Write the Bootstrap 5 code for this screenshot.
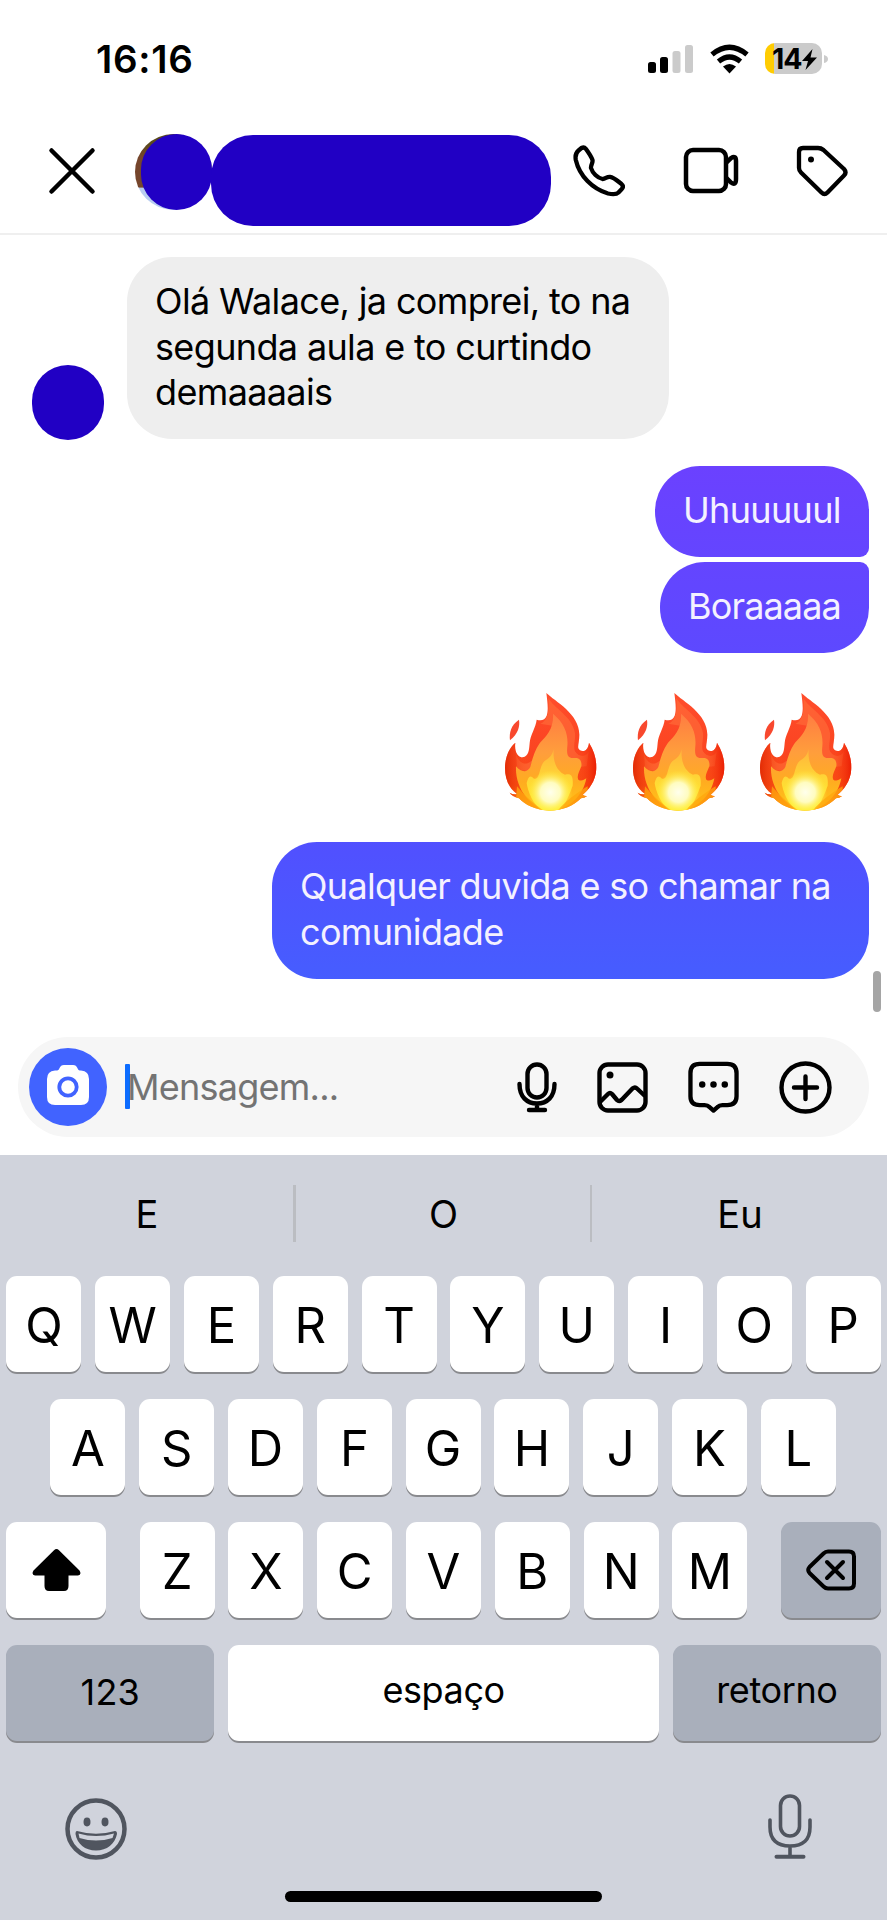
<!DOCTYPE html>
<html lang="pt-BR">
<head>
<meta charset="utf-8">
<meta name="viewport" content="width=device-width, initial-scale=1">
<title>Mensagens</title>
<link href="https://cdn.jsdelivr.net/npm/bootstrap@5.3.0/dist/css/bootstrap.min.css" rel="stylesheet">
<style>
  body { font-family: Inter, "Liberation Sans", sans-serif; color: #000; background: #fff; width: 887px; height: 1920px; overflow: hidden; }
  svg { display: block; flex: none; }
  .status { height: 118px; padding: 0 63px 0 96px; }
  .clock { font-size: 38.5px; font-weight: 600; line-height: 118px; letter-spacing: .7px; }
  .indicators { padding-top: 43px; }
  .signal { margin-right: 17px; }
  .wifi { margin-right: 16px; }
  .bolt { margin: 6px 0 0 0; }
  .nub { margin: 12px -4px 0 2px; }
  .battery { width: 57px; height: 31px; border-radius: 10px; background: linear-gradient(90deg, #ffcc02 9px, #cbcbcb 9px); font-size: 28.5px; font-weight: 700; line-height: 32px; padding-left: 7px; letter-spacing: -1px; }
  .topbar { height: 117px; border-bottom: 2px solid #efefef; padding: 16px 38px 0 47px; }
  .close-icon { margin: 11.500px 38px 0 0; }
  .phone-icon { margin: 11px 0 0 22px; }
  .video-icon { margin: 12.500px 0 0 58px; }
  .tag-icon { margin: 11px 0 0 57px; }
  .photo { width: 77px; height: 76px; border-radius: 50%; background: linear-gradient(#5a4a1c 0 12%, #75452c 30% 70%, #b9cdf0 71%); padding-left: 6px; }
  .ink { background: #2100c4; }
  .photo .ink { width: 71px; height: 76px; border-radius: 36px; }
  .name-cover { width: 340px; height: 91px; border-radius: 42px; margin: 1px 0 0 -1px; }
  .chat { height: 802px; padding: 22px 18px 0 32px; }
  .peer { width: 72px; height: 75px; border-radius: 36px; margin-right: 23px; margin-bottom: -1px; }
  .bubble { border-radius: 45px; padding: 22px 28px 23px; font-size: 36px; line-height: 45.6px; white-space: nowrap; }
  .theirs { background: #eee; width: 542px; height: 182px; letter-spacing: -.64px; }
  .mine { color: #f4f1ff; letter-spacing: -.68px; }
  .m1 { width: 214px; height: 91px; border-bottom-right-radius: 9px; background: linear-gradient(#6b41ff, #6445ff); margin-top: 27px; }
  .m2 { width: 209px; height: 91px; border-top-right-radius: 9px; background: linear-gradient(#6445ff, #5d49ff); margin-top: 5px; letter-spacing: -.85px; }
  .m3 { width: 597px; height: 137px; background: linear-gradient(#5150ff, #465dff); margin-top: 31px; }
  .flames { gap: 35.5px; margin: 40px 17px 0 0; }
  .scroller { right: 6px; top: 736px; width: 8px; height: 41px; border-radius: 4px; background: #a5a5a5; }
  .composer { height: 100px; margin: 0 18px; border-radius: 50px; background: #f6f6f6; padding: 0 37px 0 11px; }
  .cam { width: 78px; height: 78px; background: #4163ff; }
  .cam svg { margin-bottom: 4px; }
  .caret { width: 5px; height: 45px; border-radius: 1px; background: #0c6cff; margin-left: 17.5px; }
  .hint { font-size: 36px; color: #737373; letter-spacing: -.75px; margin-left: -2.5px; }
  .actions { gap: 40px; }
  .actions svg { margin-top: 1px; }
  .keyboard { height: 765px; margin-top: 18.5px; background: #d0d3dc; }
  .suggest { height: 120.5px; font-size: 38px; padding-top: 2px; }
  .suggest div { line-height: 115px; }
  .suggest .bar { width: 2.5px; height: 57px; background: #bbbdc2; margin: 28px 1px 0 -1px; }
  .keys { height: 96px; margin-bottom: 27px; padding: 0 6.3px; gap: 13.8px; }
  .nudge { padding-right: 7px; }
  .key { flex: none; width: 75px; height: 96px; border-radius: 11px; background: #fff; box-shadow: 0 2px 0 #898a8e; font-size: 49px; line-height: 99.5px; text-align: center; }
  .dim { background: #a9afbb; }
  .wide { width: 100px; display: flex; align-items: center; justify-content: center; }
  .word { font-size: 36px; line-height: 91px; letter-spacing: -.4px; }
  .side { width: 208px; }
  .digits { line-height: 95px; letter-spacing: .2px; }
  .space { width: 431px; }
  .tray { padding: 26.500px 75px 0 65px; }
  .smile { margin-top: 4px; }
  .home-line { width: 317px; height: 11px; border-radius: 6px; background: #000; margin-top: 30.5px; }
</style>
</head>
<body class="d-flex flex-column">
<svg width="0" height="0" class="position-absolute">
  <defs>
    <linearGradient id="fo" x1="0" y1="0" x2="0" y2="1"><stop offset="0" stop-color="#ff4d2c"/><stop offset=".5" stop-color="#fb4421"/><stop offset=".78" stop-color="#f84a10"/><stop offset="1" stop-color="#ffa010"/></linearGradient>
    <linearGradient id="fs" x1="0" y1="0" x2="1" y2="0"><stop offset="0" stop-color="#dc2500" stop-opacity=".8"/><stop offset=".25" stop-color="#ff5a20" stop-opacity="0"/><stop offset=".75" stop-color="#ff5a20" stop-opacity="0"/><stop offset="1" stop-color="#e81800" stop-opacity=".9"/></linearGradient>
    <linearGradient id="fm" x1="0" y1="0" x2="0" y2="1"><stop offset="0" stop-color="#ff7c42"/><stop offset=".4" stop-color="#ff9e3c"/><stop offset=".7" stop-color="#ffac20"/><stop offset="1" stop-color="#ffc816"/></linearGradient>
    <linearGradient id="fy" x1="0" y1="0" x2="0" y2="1"><stop offset="0" stop-color="#ffb43c"/><stop offset=".5" stop-color="#ffd835"/><stop offset="1" stop-color="#fff02c"/></linearGradient>
    <radialGradient id="fw"><stop offset="0" stop-color="#ffffec"/><stop offset=".45" stop-color="#fffcc0"/><stop offset="1" stop-color="#ffee40" stop-opacity="0"/></radialGradient>
    <clipPath id="fc"><path d="M124 0C150 25 223 62 223 125C223 145 218 158 220 166C224 177 248 182 252 149C268 175 275 200 274 228C272 265 250 292 233 305Q241 311 247 308Q240 315 228 316C205 340 170 353 133 353C95 353 58 335 42 316C28 312 18 306 14 299Q25 306 36 303C10 285 0 255 0 225C0 195 12 165 31 149C27 178 40 195 53 193C72 190 72 170 74 150C76 125 92 105 95 80C108 84 120 82 125 68C131 50 127 25 124 0Z"/></clipPath>
    <symbol id="flame" viewBox="0 0 276 354">
      <path fill="#f8482e" d="M42 80C45 100 40 121 15 142C12 120 17 97 42 80Z"/>
      <g clip-path="url(#fc)">
        <rect width="276" height="354" fill="url(#fo)"/>
        <path fill="#ff6f3b" d="M130 14C145 45 203 70 210 120C212 140 204 160 210 175C222 195 245 192 251 175L245 220L190 225L150 90L90 190C70 225 40 215 33 180L36 230L110 240L150 100L106 92Q136 80 130 14Z" opacity=".6"/>
        <rect width="276" height="354" fill="url(#fs)"/>
        <path fill="url(#fm)" d="M144 62C180 92 190 125 187 160C184 190 190 197 208 195C225 193 231 205 229 220C224 235 214 248 220 260C228 266 237 261 244 256C235 310 185 354 135 354C75 345 30 285 33 220C50 240 68 238 76 222C83 196 88 173 105 149C125 130 147 105 144 62Z"/>
        <path fill="url(#fy)" d="M146 168C143 205 155 235 180 245C200 240 205 250 203 278C195 300 177 345 162 354H110C85 335 68 295 65 270C70 250 75 245 87 257C106 262 102 220 118 205C132 195 142 188 146 168Z"/>
        <ellipse cx="136" cy="298" rx="66" ry="66" fill="url(#fw)"/>
        <path fill="#ffa60e" d="M36 280C60 310 90 335 116 354H30ZM158 354C180 325 215 300 248 280V354Z" opacity=".75"/>
      </g>
    </symbol>
  </defs>
</svg>

<div class="status d-flex justify-content-between">
  <div class="clock">16:16</div>
  <div class="indicators d-flex align-items-start">
    <svg class="signal" width="45" height="31" viewBox="0 0 45 31"><rect x="0" y="19" width="8" height="11" rx="2.500"/><rect x="12" y="14" width="8" height="16" rx="2.500"/><g fill="#cbcbcb"><rect x="24.500" y="8" width="8" height="22" rx="2.500"/><rect x="37" y="2" width="8" height="28" rx="2.500"/></g></svg>
    <svg class="wifi" width="39" height="31" viewBox="0 0 39 31"><g fill="none" stroke="#000" stroke-width="5.200"><path d="M2 11.500Q19.500-3 37 11.500"/><path d="M8.500 18.500Q19.500 9.500 30.500 18.500"/></g><path d="M13 23.500Q19.500 18.500 26 23.500L19.500 30.500Z"/></svg>
    <div class="battery d-flex">14<svg class="bolt" width="15" height="21" viewBox="0 0 15 21"><path d="M10.500 0L0 12H6L3.500 21L15 8.500H8.500Z"/></svg></div>
    <svg class="nub" width="4" height="8" viewBox="0 0 4 8"><path fill="#cbcbcb" d="M0 0Q4 1 4 4T0 8Z"/></svg>
  </div>
</div>

<header class="topbar d-flex align-items-start">
  <svg class="close-icon" width="50" height="50" viewBox="0 0 50 50"><path d="M4.500 4.500L45.500 45.500M45.500 4.500L4.500 45.500" stroke="#000" stroke-width="4.500" stroke-linecap="round"/></svg>
  <div class="photo"><div class="ink"></div></div>
  <div class="name-cover ink"></div>
  <svg class="phone-icon" width="52" height="52" viewBox="0 0 52 52" fill="none" stroke="#000" stroke-width="4.300" stroke-linejoin="round"><path d="M5.500 5.500L8.500 3C10 2.200 11.500 2.200 12.800 3.800C15.500 7.500 18 11 19.500 15C20.200 18 17.500 20 18 23C19.500 28 24.500 33 29.500 34C32.500 34.200 33.500 31.500 37 31.800C41.500 32.500 44.500 36 48.500 39C50.200 40.500 50 42.500 48.800 44L45.500 47.500C43.500 49.500 40 49.500 35 48.500C19.500 44 6.500 31 2.800 15C2 10.500 2.500 8 5.500 5.500Z"/></svg>
  <svg class="video-icon" width="56" height="48" viewBox="0 0 56 48" fill="none" stroke="#000" stroke-width="4.500" stroke-linejoin="round"><rect x="3" y="3" width="40" height="41" rx="7"/><path d="M43 16L48 11.200Q53 8 53 14V32Q53 39 48 35.500L43 30.500"/></svg>
  <svg class="tag-icon" width="52" height="52" viewBox="0 0 52 52" fill="none" stroke="#000" stroke-width="4.300" stroke-linejoin="round"><path d="M7 3H22Q25 3 27.500 5L48 24Q51 27.500 48 30.500L31.500 47.500Q28.500 50.500 25.500 47.500L5 27.500Q3 25.500 3 23V7Q3 3 7 3Z"/><circle cx="15" cy="14.500" r="3" fill="#000" stroke="none"/></svg>
</header>

<main class="chat position-relative d-flex flex-column align-items-end">
  <div class="align-self-start d-flex align-items-end">
    <div class="peer ink"></div>
    <div class="bubble theirs">Olá Walace, ja comprei, to na<br>segunda aula e to curtindo<br>demaaaais</div>
  </div>
  <div class="bubble mine m1">Uhuuuuul</div>
  <div class="bubble mine m2">Boraaaaa</div>
  <div class="flames d-flex">
    <svg width="92" height="118"><use href="#flame"/></svg>
    <svg width="92" height="118"><use href="#flame"/></svg>
    <svg width="92" height="118"><use href="#flame"/></svg>
  </div>
  <div class="bubble mine m3">Qualquer duvida e so chamar na<br>comunidade</div>
  <div class="scroller position-absolute"></div>
</main>

<div class="composer d-flex align-items-center">
  <div class="cam rounded-circle d-flex align-items-center justify-content-center">
    <svg width="42" height="40" viewBox="0 0 42 40"><path fill="#fff" d="M8 5.500H10C13 5.500 12 0 17 0H26C31 0 30 5.500 33 5.500H34Q42 6 42 14V32Q42 40 34 40H8Q0 40 0 32V14Q0 6 8 5.500Z"/><circle cx="21" cy="22" r="8.700" fill="none" stroke="#4163ff" stroke-width="3.800"/></svg>
  </div>
  <div class="caret"></div>
  <div class="hint">Mensagem...</div>
  <div class="actions ms-auto d-flex align-items-center">
    <svg width="40" height="51" viewBox="0 0 40 51" fill="none" stroke="#000" stroke-width="4.400" stroke-linecap="round"><rect x="10.500" y="2.500" width="19" height="33" rx="9.500"/><path d="M2.500 22C2.500 35 10 41.500 20 41.500S37.500 35 37.500 22M20 42V47M12 48H28"/></svg>
    <svg width="51" height="51" viewBox="0 0 51 51" fill="none" stroke="#000" stroke-width="4.400" stroke-linejoin="round"><rect x="2.500" y="2.500" width="46" height="46" rx="8.500"/><path d="M3 40L11 32Q13 30 15 32L20 38Q22 40 24.500 38L35.500 26.500Q38 24.500 40 26.500L48 34"/><circle cx="13" cy="13" r="3.500" fill="#000" stroke="none"/></svg>
    <svg width="51" height="52" viewBox="0 0 52 53" fill="none" stroke="#000" stroke-width="4.400" stroke-linejoin="round"><path d="M12 3H40Q49.500 3 49.500 12.500V36Q49.500 45 40 45H35Q32 45 30 47L26 50.500L22 47Q20 45 17 45H12Q2.500 45 2.500 36V12.500Q2.500 3 12 3Z"/><g fill="#000" stroke="none"><circle cx="14.500" cy="24" r="3.300"/><circle cx="26" cy="24" r="3.300"/><circle cx="37.500" cy="24" r="3.300"/></g></svg>
    <svg width="53" height="53" viewBox="0 0 53 53" fill="none" stroke="#000" stroke-width="4.400" stroke-linecap="round"><circle cx="26.500" cy="26.500" r="24"/><path d="M26.500 15.500V38M15 26.500H38"/></svg>
  </div>
</div>

<section class="keyboard d-flex flex-column">
  <div class="suggest d-flex text-center">
    <div class="col">E</div><div class="bar"></div><div class="col">O</div><div class="bar"></div><div class="col">Eu</div>
  </div>
  <div class="keys d-flex justify-content-center">
    <div class="key">Q</div><div class="key">W</div><div class="key">E</div><div class="key">R</div><div class="key">T</div><div class="key">Y</div><div class="key">U</div><div class="key">I</div><div class="key">O</div><div class="key">P</div>
  </div>
  <div class="keys nudge d-flex justify-content-center">
    <div class="key">A</div><div class="key">S</div><div class="key">D</div><div class="key">F</div><div class="key">G</div><div class="key">H</div><div class="key">J</div><div class="key">K</div><div class="key">L</div>
  </div>
  <div class="keys d-flex">
    <div class="key wide me-auto"><svg width="49" height="42" viewBox="0 0 49 42"><path d="M22 1.200Q24.500-1 27 1.200L47.500 21.500Q50 26 46 26.500H36.500V37Q36.500 42 32 42H17Q12.500 42 12.500 37V26.500H3Q-1 26 1.500 21.500Z"/></svg></div>
    <div class="key">Z</div><div class="key">X</div><div class="key">C</div><div class="key">V</div><div class="key">B</div><div class="key">N</div><div class="key">M</div>
    <div class="key dim wide ms-auto"><svg width="50" height="42" viewBox="0 0 50 42" fill="none" stroke="#000" stroke-width="4" stroke-linejoin="round"><path d="M22 2.500H43Q48 2.500 48 7.500V34.500Q48 39.500 43 39.500H22Q19.500 39.500 17.500 37.500L3.500 24Q1 21 3.500 18L17.500 4.500Q19.500 2.500 22 2.500Z"/><path stroke-linecap="round" d="M21 13L37 29M37 13L21 29"/></svg></div>
  </div>
  <div class="keys d-flex justify-content-between">
    <div class="key dim word side digits">123</div>
    <div class="key word space">espaço</div>
    <div class="key dim word side">retorno</div>
  </div>
  <div class="tray d-flex justify-content-between">
    <svg class="smile" width="62" height="62" viewBox="0 0 62 62" fill="#50555f"><circle cx="31" cy="31" r="28.500" fill="none" stroke="#50555f" stroke-width="4.500"/><ellipse cx="22" cy="24" rx="3.500" ry="4.400"/><ellipse cx="40" cy="24" rx="3.500" ry="4.400"/><path fill-rule="evenodd" d="M12 33Q31 38.500 50 33Q52 33 52 36C50 46 42 52.500 31 52.500S12 46 10.500 36Q10.500 33 12 33ZM13.500 35.500L14.500 40Q31 45 47.500 40L49 35.500Q31 40.500 13.500 35.500Z"/></svg>
    <svg width="44" height="66" viewBox="0 0 44 66" fill="none" stroke="#50555f" stroke-width="3.600" stroke-linecap="round"><rect x="12.500" y="2" width="19" height="40" rx="9.500"/><path d="M2 26V33Q2 52 22 52T42 33V26M22 52V61"/><path d="M8.500 62.800H35.500" stroke-width="4"/></svg>
  </div>
  <div class="home-line mx-auto"></div>
</section>
<script src="https://cdn.jsdelivr.net/npm/bootstrap@5.3.0/dist/js/bootstrap.bundle.min.js"></script>
</body>
</html>
